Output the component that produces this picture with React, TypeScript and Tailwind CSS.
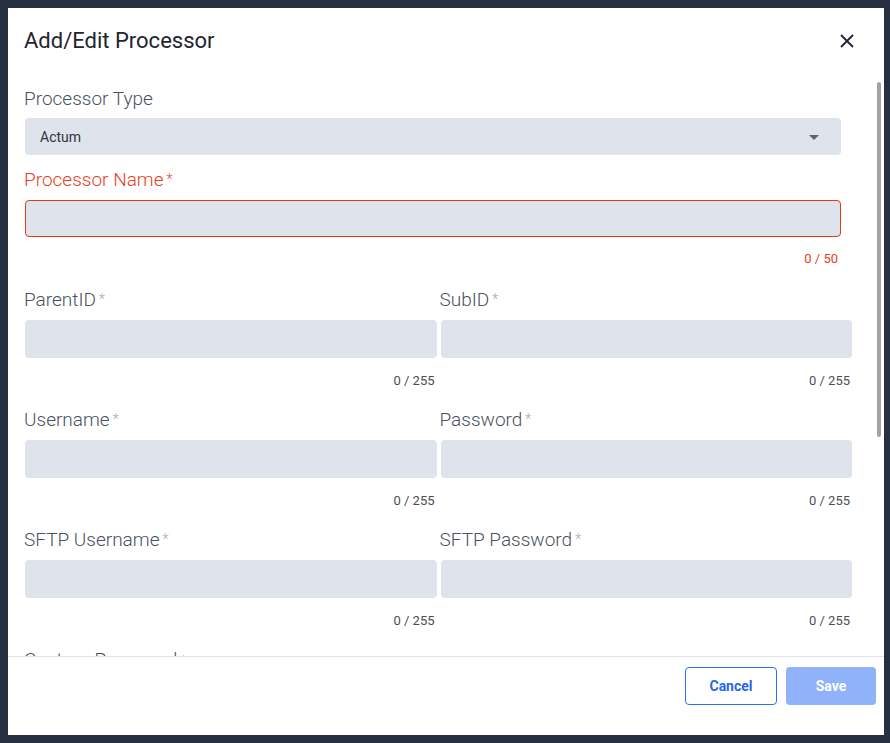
import React from "react";

const font = { fontFamily: "Roboto, 'Noto Sans', sans-serif" };

function Label({ text, error }: { text: string; error?: boolean }) {
  return (
    <div
      className={`h-[28px] leading-[28px] text-[19px] font-light ${
        error ? "text-[#e8401c]" : "text-[#4a5160]"
      }`}
    >
      {text}
      <span className={`ml-[3px] text-[14px] align-[2px] ${error ? "text-[#e8401c]" : "text-[#a3a8b1]"}`}>*</span>
    </div>
  );
}

function Field({ label }: { label: string }) {
  return (
    <div className="flex flex-col h-[120px]">
      <Label text={label} />
      <div className="mt-[7px] mx-[1px] h-[38px] rounded-[4px] bg-[#dfe3eb]" />
      <div className="mt-[15px] h-[16px] leading-[16px] text-[13px] font-normal text-right pr-[3px] text-[#4a4e55]">
        0 / 255
      </div>
    </div>
  );
}

export default function App() {
  return (
    <div className="w-[890px] h-[743px] bg-[#273040] pl-2 pt-2" style={font}>
      <div className="relative w-[876px] h-[727px] bg-white flex flex-col overflow-hidden">
        <div className="flex justify-between pl-4 pr-[30px] pt-[19px] h-[77px] items-start">
          <h1 className="text-[22px] leading-[28px] text-[#1f2430] font-normal">Add/Edit Processor</h1>
          <svg width="14" height="14" viewBox="0 0 14 14" className="mt-[7px]">
            <path d="M1 1 L13 13 M13 1 L1 13" stroke="#1f2430" strokeWidth="1.8" />
          </svg>
        </div>
        <div className="flex-1 overflow-hidden pl-4">
          <div className="w-[817px]">
            <div className="h-[28px] leading-[28px] text-[19px] font-light text-[#4a5160]">Processor Type</div>
            <div className="mt-[5px] ml-[1px] h-[37px] rounded-[4px] bg-[#dfe3eb] flex items-center justify-between pl-[15px] pr-[22px] pt-[2px]">
              <span className="text-[14px] text-[#30343b]">Actum</span>
              <svg width="10" height="5" viewBox="0 0 10 5">
                <path d="M0 0 L10 0 L5 5 Z" fill="#5f636b" />
              </svg>
            </div>
            <div className="mt-[10px]">
              <Label text="Processor Name" error />
            </div>
            <div className="mt-[7px] ml-[1px] h-[37px] rounded-[4px] bg-[#dfe3eb] border border-[#e23a10]" />
            <div className="mt-[14px] h-[16px] leading-[16px] text-[13px] text-right pr-[3px] text-[#e8401c]">
              0 / 50
            </div>
          </div>
          <div className="mt-[18px] w-[829px] grid grid-cols-2 gap-x-[2px]">
            <Field label="ParentID" />
            <Field label="SubID" />
            <Field label="Username" />
            <Field label="Password" />
            <Field label="SFTP Username" />
            <Field label="SFTP Password" />
            <div className="mt-[1px] h-[28px] leading-[28px] text-[19px] font-light text-[#4a5160]">
              Custom Password<span className="ml-[3px] text-[14px] text-[#a3a8b1]">*</span>
            </div>
          </div>
        </div>
        <div className="h-[79px] border-t border-[#e2e4e8] flex items-start justify-end gap-[9px] pt-[10px] pr-[8px]">
          <button className="w-[92px] h-[38px] rounded-[4px] border border-[#2f6ef0] text-[#2a66ee] text-[14px] font-bold bg-white">
            Cancel
          </button>
          <button className="w-[90px] h-[38px] rounded-[4px] bg-[#8fb2fb] text-white text-[14px] font-bold">
            Save
          </button>
        </div>
        <div className="absolute left-[869px] top-[74px] w-[4px] h-[355px] rounded-[2px] bg-[#a3a3a3]" />
      </div>
    </div>
  );
}
